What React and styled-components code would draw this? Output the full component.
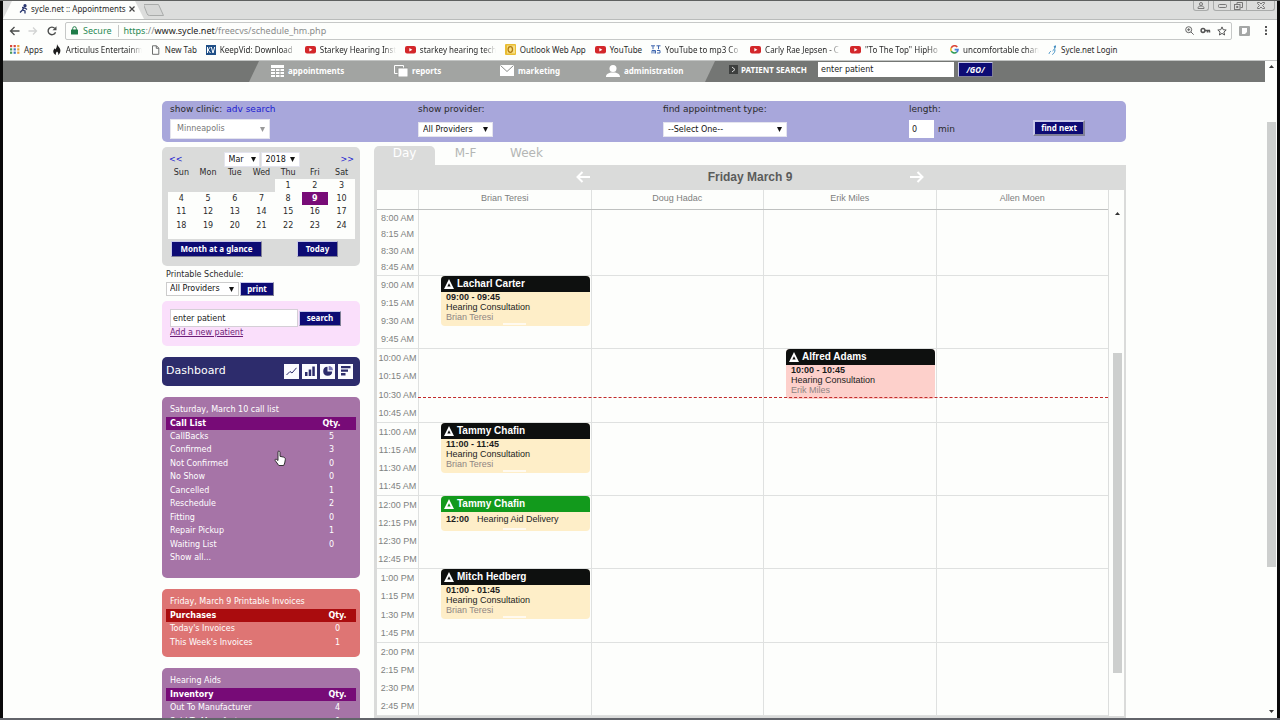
import React from "react";
import styled, { createGlobalStyle, css } from "styled-components";

const verdana = '"DejaVu Sans", sans-serif';
const arial = '"Liberation Sans", sans-serif';
const segoe = '"Noto Sans", sans-serif';

const GlobalStyle = createGlobalStyle`
  *, *::before, *::after { box-sizing: border-box; }
  body { margin: 0; background: #0a0a0a; font: 8px/10px ${verdana}; color: #2a2a2a; }
  a { color: inherit; text-decoration: none; }
  button, input, select { font: inherit; color: inherit; margin: 0; }
`;

/* ---------- browser window ---------- */
const Window = styled.div`
  display: flex;
  flex-direction: column;
  height: 100vh;
  padding: 1px 3px 2px;
  background: linear-gradient(#5e605f 1px, #0a0a0a 1px, #0a0a0a calc(100% - 2px), #62646a calc(100% - 2px));
  overflow: hidden;
`;
const TabStrip = styled.div`
  display: flex;
  justify-content: space-between;
  flex: 0 0 18px;
  background: #dcdddc;
  border-bottom: 1px solid #b9bbba;
`;
const TabGroup = styled.div`
  display: flex;
  align-items: flex-start;
`;
const BrowserTab = styled.div`
  display: flex;
  align-items: center;
  gap: 3px;
  width: 141px;
  height: 18px;
  padding: 0 0 2px 16px;
  background: #fdfefc;
  clip-path: polygon(9px 0, 132px 0, 100% 100%, 0 100%);
  font-family: ${segoe};
  svg { flex: none; }
`;
const TabTitle = styled.span`
  white-space: nowrap;
`;
const WindowControls = styled.div`
  display: flex;
  gap: 4px;
  padding-right: 2px;
`;
const ControlBox = styled.div`
  display: flex;
  height: 10px;
  border: 1px solid #a9abaa;
  border-top: 0;
  border-radius: 0 0 3px 3px;
`;
const ControlButton = styled.button`
  display: grid;
  place-items: center;
  width: ${(p) => p.$w}px;
  padding: 0;
  border: 0;
  background: none;
  & + & { border-left: 1px solid #a9abaa; }
`;
const AddressRow = styled.div`
  display: flex;
  align-items: center;
  flex: 0 0 21px;
  padding-left: 5px;
  background: #fdfefc;
  gap: 7px;
`;
const ToolButton = styled.button`
  display: grid;
  place-items: center;
  width: 12px;
  height: 12px;
  padding: 0;
  border: 0;
  background: none;
`;
const AddressBox = styled.div`
  display: flex;
  align-items: center;
  flex: 1;
  height: 18px;
  gap: 5px;
  padding: 0 4px 0 5px;
  border: 1px solid #c6c8c7;
  border-radius: 2px;
  font: 9px/12px ${segoe};
  color: #8b8d8c;
`;
const Secure = styled.span`
  padding-right: 6px;
  border-right: 1px solid #c6c8c7;
  color: #2b8a56;
`;
const Url = styled.span`
  flex: 1;
  b { font-weight: 400; color: #222; }
  i { font-style: normal; color: #2b8a56; }
`;
const MenuSlot = styled.div`
  display: flex;
  align-items: center;
  justify-content: space-between;
  width: 38px;
  padding: 0 9px 0 0;
`;
const Bookmarks = styled.nav`
  display: flex;
  align-items: center;
  flex: 0 0 20px;
  gap: 9px;
  padding: 0 0 2px 7px;
  background: #fdfefc;
  border-bottom: 1px solid #c3c5c4;
  font: 8px/12px ${segoe};
`;
const Bookmark = styled.a`
  display: flex;
  align-items: center;
  gap: 4px;
  flex: none;
  svg { flex: none; }
`;
const BookmarkText = styled.span`
  white-space: nowrap;
  ${(p) => p.$cut && css`
    width: 76px;
    mask-image: linear-gradient(90deg, #000 84%, transparent);
  `}
`;

/* ---------- page frame ---------- */
const PageArea = styled.div`
  display: flex;
  flex: 1;
  min-height: 0;
  background: #fdfefc;
`;
const Page = styled.div`
  flex: 1;
  min-width: 0;
  overflow: hidden;
`;
const PageScroll = styled.div`
  display: grid;
  grid-template-rows: 61px 445px 1fr;
  justify-items: center;
  width: 12px;
`;
const PageThumb = styled.div`
  width: 9px;
  background: #cdcfce;
`;
const ScrollArrow = styled.svg`
  width: 5px;
  height: 3px;
  margin: ${(p) => (p.$down ? "0 0 5px" : "4px 0 0")};
  align-self: ${(p) => (p.$down ? "end" : "start")};
`;
const NavBar = styled.header`
  display: flex;
  height: 21px;
  padding-left: 246px;
  background: #747674;
  color: #fff;
`;
const NavTabs = styled.nav`
  display: flex;
  background: #a2a4a2;
  clip-path: polygon(10px 0, 100% 0, calc(100% - 10px) 100%, 0 100%);
`;
const NavTab = styled.a`
  position: relative;
  display: flex;
  align-items: center;
  gap: 4px;
  width: ${(p) => p.$w}px;
  padding: 0 0 2px ${(p) => p.$pad}px;
  font: 700 8px/12px ${segoe};
  & + &::before {
    content: "";
    position: absolute;
    left: 4px;
    top: 0;
    width: 2px;
    height: 100%;
    background: #4b4d4c;
    transform: skewX(-26deg);
  }
`;
const PatientSearch = styled.form`
  display: flex;
  align-items: flex-start;
  gap: 4px;
  padding: 1px 0 0 14px;
`;
const SearchLabel = styled.label`
  display: flex;
  align-items: center;
  gap: 3px;
  height: 15px;
  width: 85px;
  white-space: nowrap;
  font: 700 8px/12px ${segoe};
`;
const TextBox = styled.input`
  width: ${(p) => p.$w}px;
  height: ${(p) => p.$h || 18}px;
  padding: 0 2px;
  border: 1px solid ${(p) => p.$edge || "#fff"};
  background: #fff;
  color: #222;
`;
const NavyButton = styled.button`
  width: ${(p) => p.$w}px;
  height: ${(p) => p.$h || 15}px;
  padding: 0;
  border: ${(p) => p.$b || 1}px outset #c8c8ea;
  background: #0d0b74;
  color: #fff;
  white-space: nowrap;
  font: ${(p) => (p.$italic ? "italic" : "normal")} 700 8px/10px ${segoe};
`;
const Content = styled.div`
  display: flex;
  flex-direction: column;
  gap: 4px;
  padding: 19px 139px 0 159px;
`;

/* ---------- filter bar ---------- */
const FilterBar = styled.form`
  display: grid;
  grid-template-columns: 248fr 245fr 246fr 124fr 93fr;
  height: 41px;
  padding: 2px 0 0 8px;
  border-radius: 5px;
  background: #a8a7db;
`;
const FilterField = styled.div`
  display: flex;
  flex-direction: column;
  align-items: flex-start;
  gap: ${(p) => p.$gap}px;
  label, span, a { font-size: 9px; line-height: 12px; }
  a { color: #1c1cd0; }
`;
const Inline = styled.div`
  display: flex;
  align-items: center;
  gap: 4px;
`;
const FindCell = styled.div`
  padding-top: 17px;
`;

const SelectFrame = styled.div`
  display: grid;
  align-items: center;
  width: ${(p) => p.$w}px;
  height: ${(p) => p.$h || 15}px;
  border: 1px solid ${(p) => p.$edge || "#e4e4ee"};
  background: #fff;
  select, svg { grid-area: 1 / 1; }
  svg { justify-self: end; margin-right: ${(p) => p.$arrow || 4}px; pointer-events: none; }
`;
const PlainSelect = styled.select`
  appearance: none;
  width: 100%;
  height: 100%;
  padding: 0 0 0 ${(p) => p.$pad}px;
  border: 0;
  background: none;
  color: ${(p) => p.$color};
  font-size: 8px;
  line-height: 10px;
`;
function Select({ id, label, value, w, h, pad = 4, color = "#111", arrowColor = "#111", edge, arrow }) {
  return (
    <SelectFrame $w={w} $h={h} $edge={edge} $arrow={arrow}>
      <PlainSelect id={id} aria-label={label} $pad={pad} $color={color}>
        <option>{value}</option>
      </PlainSelect>
      <svg width="5" height="5" viewBox="0 0 5 5"><path d="M0 0h5L2.500 5z" fill={arrowColor} /></svg>
    </SelectFrame>
  );
}

/* ---------- sidebar ---------- */
const Columns = styled.div`
  display: flex;
  gap: 14px;
`;
const Sidebar = styled.aside`
  flex: 0 0 198px;
  padding-top: 1px;
`;
const MiniCalendar = styled.section`
  height: 119px;
  padding: 5px 5px 0 6px;
  border-radius: 5px;
  background: #dadbda;
`;
const MonthRow = styled.div`
  display: flex;
  justify-content: space-between;
  align-items: center;
  padding: 0 1px;
  color: #1c1cd0;
`;
const MonthPickers = styled.div`
  display: flex;
  gap: 1px;
`;
const DayTable = styled.table`
  width: 100%;
  table-layout: fixed;
  border-collapse: collapse;
  text-align: center;
  th { height: 12px; padding: 0; font-weight: 400; }
  td { height: 13px; padding: 0; background: #fdfefc; }
  tr:last-child td { height: 21px; padding-bottom: 6px; }
  td:empty { background: #dadbda; }
  td[aria-selected="true"] { background: #770b77; color: #fff; font-weight: 700; }
`;
const CalendarButtons = styled.div`
  display: flex;
  justify-content: space-between;
  padding: 2px 17px 0 3px;
`;
const Printable = styled.form`
  display: flex;
  flex-direction: column;
  gap: 2px;
  padding: 4px 0 5px 4px;
`;
const PrintRow = styled.div`
  display: flex;
  gap: 1px;
`;
const SearchPanel = styled.form`
  display: flex;
  flex-direction: column;
  gap: 1px;
  height: 45px;
  padding: 8px;
  border-radius: 5px;
  background: #fadffb;
  a { color: #6d1c77; text-decoration: underline; }
`;
const Dashboard = styled.section`
  display: flex;
  align-items: center;
  gap: 3px;
  height: 29px;
  margin-top: 11px;
  padding: 0 7px 1px 4px;
  border-radius: 5px;
  background: #2d2c6c;
  h2 { flex: 1; margin: 0; font: 400 11px/14px ${verdana}; color: #fff; }
`;
const ChartButton = styled.button`
  display: grid;
  place-items: center;
  width: 15px;
  height: 15px;
  padding: 0;
  border: 0;
  background: #fbfbff;
`;
const ListPanel = styled.section`
  margin-top: 11px;
  padding: 7px 4px ${(p) => p.$bottom}px;
  border-radius: 5px;
  background: ${(p) => p.$bg};
  color: #fff;
`;
const ListTable = styled.table`
  width: 100%;
  height: ${(p) => p.$h}px;
  border-collapse: collapse;
  caption { height: 13px; padding-left: 4px; text-align: left; line-height: 12px; white-space: nowrap; }
  th { height: 13px; padding: 0 0 0 4px; background: ${(p) => p.$band}; text-align: left; font-weight: 700; }
  td { height: 13px; padding: 0 0 0 4px; }
  th:last-child, td:last-child { width: ${(p) => p.$qty}px; padding: 0; text-align: center; }
`;
function CountList({ title, heading, rows, bg, band, qty, h, bottom = 7 }) {
  return (
    <ListPanel $bg={bg} $bottom={bottom}>
      <ListTable $band={band} $qty={qty} $h={h}>
        <caption>{title}</caption>
        <thead><tr><th>{heading}</th><th>Qty.</th></tr></thead>
        <tbody>
          {rows.map(([name, count]) => (
            <tr key={name}><td><a href="#list">{name}</a></td><td>{count}</td></tr>
          ))}
        </tbody>
      </ListTable>
    </ListPanel>
  );
}

/* ---------- schedule ---------- */
const Schedule = styled.main`
  flex: 1;
  min-width: 0;
  font-family: ${arial};
`;
const ViewTabs = styled.nav`
  display: flex;
  align-items: flex-start;
  height: 19px;
  font: 12px/15px ${verdana};
`;
const ViewTab = styled.a`
  width: 61px;
  height: 19px;
  text-align: center;
  color: ${(p) => (p.$on ? "#fff" : "#b4b6b5")};
  background: ${(p) => (p.$on ? "#dadbda" : "none")};
  border-radius: 5px 5px 0 0;
`;
const DateBar = styled.div`
  display: flex;
  align-items: center;
  justify-content: center;
  gap: 118px;
  height: 25px;
  padding-bottom: 2px;
  background: #dadbda;
  h1 { margin: 0; font: 700 12px/16px ${arial}; color: #5a5c5b; }
`;
const ArrowButton = styled.button`
  display: grid;
  padding: 0;
  border: 0;
  background: none;
`;
const Board = styled.div`
  display: flex;
  border: solid #dadbda;
  border-width: 0 2px 2px 3px;
`;
const BoardMain = styled.div`
  flex: 1;
  border-right: 1px solid #dcdedd;
`;
const gridColumns = css`
  display: grid;
  grid-template-columns: 41px repeat(4, 1fr);
`;
const ProviderRow = styled.div`
  ${gridColumns}
  height: 20px;
  border-bottom: 1px solid #bfc1c0;
`;
const Provider = styled.div`
  border-left: 1px solid #dfe1e0;
  text-align: center;
  font-size: 9px;
  line-height: 17px;
  color: #7d7f7e;
`;
const Hours = styled.div`
  display: grid;
  grid-template-rows: 66px;
  grid-auto-rows: 1fr;
  height: 506px;
`;
const HourRow = styled.div`
  ${gridColumns}
  position: relative;
  border-bottom: 1px solid #dfe1e0;
`;
const SlotLabels = styled.div`
  display: grid;
  grid-template-rows: repeat(4, 1fr);
  align-items: center;
  text-align: center;
  font-size: 9px;
  line-height: 10px;
  color: #808281;
  white-space: nowrap;
`;
const HourCell = styled.div`
  border-left: 1px solid #dfe1e0;
  padding: 0 1px 0 22px;
`;
const NowLine = styled.div`
  position: absolute;
  left: 41px;
  right: 0;
  top: 48px;
  border-top: 1px dashed #c22b2b;
`;
const Appointment = styled.article`
  position: relative;
  height: ${(p) => p.$h}px;
  border-radius: 4px;
  overflow: hidden;
  background: ${(p) => p.$bg};
  color: #1c1c1c;
  font-size: 9px;
  line-height: 10px;
  h3 {
    display: flex;
    align-items: center;
    gap: 3px;
    height: 16px;
    margin: 0;
    padding-left: 3px;
    background: ${(p) => p.$head};
    color: #fff;
    font: 700 10px/16px ${arial};
  }
`;
const AppointmentBody = styled.div`
  display: flex;
  flex-direction: ${(p) => (p.$row ? "row" : "column")};
  gap: ${(p) => (p.$row ? 8 : 0)}px;
  padding: ${(p) => (p.$row ? 2 : 0)}px 5px 0;
  small { font-size: 9px; color: #8f8583; }
`;
const Grip = styled.i`
  position: absolute;
  left: 62px;
  bottom: 1px;
  width: 23px;
  height: 2px;
  background: #fffaf0;
`;
const BoardScroll = styled.div`
  display: grid;
  grid-template-rows: 163px 320px 1fr;
  justify-items: end;
  width: 15px;
  padding-right: 2px;
  svg { margin: 22px 2px 0 0; }
`;
const BoardThumb = styled.div`
  width: 9px;
  background: #cdcfce;
`;
const Pointer = styled.svg`
  position: fixed;
  left: 274px;
  top: 450px;
  width: 12px;
  height: 17px;
  pointer-events: none;
`;

/* ---------- icons ---------- */
const YouTubeIcon = () => (
  <svg width="11" height="9" viewBox="0 0 11 9"><rect y="1" width="11" height="7.5" rx="2" fill="#d3272a" /><path d="M4.3 3v3.6L7.4 4.8z" fill="#fff" /></svg>
);
const AppsIcon = () => (
  <svg width="10" height="9" viewBox="0 0 10 9">
    {["#d8473b", "#d8473b", "#e6a23a", "#4a9a57", "#3f74c9", "#e6a23a", "#4a9a57", "#3f74c9", "#e6a23a"].map((c, i) => (
      <rect key={i} x={(i % 3) * 3.6} y={Math.floor(i / 3) * 3.3} width="2.2" height="2.2" fill={c} />
    ))}
  </svg>
);
const FlameIcon = () => (
  <svg width="10" height="11" viewBox="0 0 10 11"><path d="M5 0c.4 2 3.4 3.600 3.400 6.600C8.400 9 7 10.600 6 11c.6-1.600.2-2.600-1-3.600-1 1-1.500 2.200-1 3.600C2 10.300 1 8.600 1.300 6.800c.2-1.200 1-1.800 1.400-2.600.3.500.6.800.7 1.300C4.600 4 5 2.500 5 0z" fill="#1b1b1b" /></svg>
);
const FileIcon = () => (
  <svg width="10" height="10" viewBox="0 0 10 10" fill="none" stroke="#6d6f6e"><path d="M1.500.8h4l2.300 2.300v6.200H1.500zM5.300.8v2.500h2.500" /></svg>
);
const KvIcon = () => (
  <svg width="10" height="10" viewBox="0 0 10 10"><rect width="10" height="10" fill="#1f4f86" /><path d="M1.500 2v6M4.300 2L2 5l2.500 3M5.300 2L7 8l1.700-6" stroke="#fff" fill="none" /></svg>
);
const OutlookIcon = () => (
  <svg width="11" height="11" viewBox="0 0 11 11"><rect width="11" height="11" rx="1" fill="#e9bd32" /><rect x="2" y="1.500" width="8" height="8" fill="#f7df85" /><ellipse cx="5.300" cy="5.500" rx="2.200" ry="2.800" fill="none" stroke="#b47d12" strokeWidth="1.300" /></svg>
);
const Mp3Icon = () => (
  <svg width="10" height="9" viewBox="0 0 10 9" stroke="#3f66ae" fill="none"><path d="M0 .8h4M2 .8v3.400M5.500.8h4M7.500.8v3.400M1 8.500V5.500h2v3M3 5.500h1.500v3M6 5.500h3v2.500H6" /></svg>
);
const GoogleIcon = () => (
  <svg width="9" height="9" viewBox="0 0 9 9" fill="none" strokeWidth="1.600"><path d="M7.300 2A3.600 3.600 0 0 0 1.300 2.800" stroke="#db4437" /><path d="M1.300 2.800a3.600 3.600 0 0 0 0 3.400" stroke="#f0b52c" /><path d="M1.300 6.200a3.600 3.600 0 0 0 5.400.9" stroke="#2f9b55" /><path d="M6.700 7.100a3.500 3.500 0 0 0 1.300-2.500H4.600" stroke="#4a7fd8" /></svg>
);
const SycleIcon = () => (
  <svg width="9" height="10" viewBox="0 0 9 10" fill="none" stroke="#3e8fc4"><path d="M7.500.5c-.5 3-1 4-3 5.500M7 4.500c0 2.500-1 4-2.700 5M2.800 6.200c-1 .6-1.500 1.600-1.800 2.600" /><circle cx="6.800" cy="1.800" r=".6" fill="#1f4d86" /></svg>
);
const SycleTabIcon = () => (
  <svg width="9" height="10" viewBox="0 0 9 10" fill="none" stroke="#27356e" strokeWidth="1.300"><circle cx="6" cy="1.700" r="1" fill="#27356e" /><path d="M5 3.500L3.500 6l2.500 1v2.500M3.500 6L1 8.500M3 3.500l3 .5 2 1.500" /></svg>
);
const TriangleIcon = () => (
  <svg width="10" height="10" viewBox="0 0 10 10"><path fillRule="evenodd" d="M5 0L10 10H0zM5 4.200L3.300 7.600h3.400z" fill="#fff" /></svg>
);
const Arrow = ({ flip }) => (
  <svg width="14" height="12" viewBox="0 0 14 12" fill="none" stroke="#fff" strokeWidth="2">
    <path d={flip ? "M0 6h12M7.500 1l5 5-5 5" : "M14 6H2M6.500 1l-5 5 5 5"} />
  </svg>
);

/* ---------- data ---------- */
const bookmarks = [
  ["Apps", AppsIcon],
  ["Articulus Entertainm", FlameIcon, true],
  ["New Tab", FileIcon],
  ["KeepVid: Download", KvIcon, true],
  ["Starkey Hearing Inst", YouTubeIcon, true],
  ["starkey hearing tech", YouTubeIcon, true],
  ["Outlook Web App", OutlookIcon],
  ["YouTube", YouTubeIcon],
  ["YouTube to mp3 Co", Mp3Icon, true],
  ["Carly Rae Jepsen - C", YouTubeIcon, true],
  ['"To The Top" HipHo', YouTubeIcon, true],
  ["uncomfortable chan", GoogleIcon, true],
  ["Sycle.net Login", SycleIcon],
];
const weeks = [
  ["", "", "", "", 1, 2, 3],
  [4, 5, 6, 7, 8, 9, 10],
  [11, 12, 13, 14, 15, 16, 17],
  [18, 19, 20, 21, 22, 23, 24],
];
const calls = [
  ["CallBacks", 5], ["Confirmed", 3], ["Not Confirmed", 0], ["No Show", 0], ["Cancelled", 1],
  ["Reschedule", 2], ["Fitting", 0], ["Repair Pickup", 1], ["Waiting List", 0], ["Show all...", ""],
];
const providers = ["Brian Teresi", "Doug Hadac", "Erik Miles", "Allen Moen"];
const hours = ["8 AM", "9 AM", "10 AM", "11 AM", "12 PM", "1 PM", "2 PM"];
const consult = "Hearing Consultation";
const appointments = [
  { hour: "9 AM", who: "Brian Teresi", name: "Lacharl Carter", time: "09:00 - 09:45", type: consult },
  { hour: "10 AM", who: "Erik Miles", name: "Alfred Adams", time: "10:00 - 10:45", type: consult, bg: "#fdd0cb" },
  { hour: "11 AM", who: "Brian Teresi", name: "Tammy Chafin", time: "11:00 - 11:45", type: consult },
  { hour: "12 PM", who: "Brian Teresi", name: "Tammy Chafin", time: "12:00", type: "Hearing Aid Delivery", head: "#129a1c", short: true },
  { hour: "1 PM", who: "Brian Teresi", name: "Mitch Hedberg", time: "01:00 - 01:45", type: consult },
];

function AppointmentCard({ item }) {
  return (
    <Appointment $h={item.short ? 35 : 50} $bg={item.bg || "#feeec8"} $head={item.head || "#0e100f"}>
      <h3><TriangleIcon />{item.name}</h3>
      <AppointmentBody $row={item.short}>
        <b>{item.time}</b>
        <span>{item.type}</span>
        {!item.short && <small>{item.who}</small>}
      </AppointmentBody>
      {!item.bg && <Grip />}
    </Appointment>
  );
}

function BrowserChrome() {
  return (
    <>
      <TabStrip>
        <TabGroup>
          <BrowserTab>
            <SycleTabIcon />
            <TabTitle>sycle.net :: Appointments</TabTitle>
            <svg width="6" height="6" viewBox="0 0 6 6" stroke="#444" strokeWidth="1.200"><path d="M.5.5l5 5M5.500.5l-5 5" /></svg>
          </BrowserTab>
          <svg width="26" height="17" viewBox="0 0 26 17"><path d="M-1.500 3.500h15l5 11h-14q-2 0-2.500-2z" fill="#d6d7d6" stroke="#a9abaa" transform="translate(1 0)" /></svg>
        </TabGroup>
        <WindowControls>
          <ControlBox>
            <ControlButton $w={14} aria-label="Profile"><svg width="8" height="7" viewBox="0 0 8 7" fill="none" stroke="#777"><circle cx="4" cy="2" r="1.500" /><path d="M1 6.500c0-2 1-2.500 3-2.500s3 .5 3 2.500z" /></svg></ControlButton>
          </ControlBox>
          <ControlBox>
            <ControlButton $w={16} aria-label="Minimize"><svg width="9" height="4" viewBox="0 0 9 4" fill="none" stroke="#777"><rect x=".5" y=".5" width="8" height="3" rx="1" /></svg></ControlButton>
            <ControlButton $w={16} aria-label="Restore"><svg width="9" height="8" viewBox="0 0 9 8" fill="none" stroke="#777"><path d="M3 2.500V.5h5.500v5h-2" /><rect x=".5" y="2.500" width="5.500" height="5" /><path d="M2.500 4.500h1.500v1H2.500z" /></svg></ControlButton>
            <ControlButton $w={28} aria-label="Close"><svg width="8" height="7" viewBox="0 0 8 7" fill="none" stroke="#777"><path d="M.5.5h2L4 2 5.500.5h2v1L5.500 3.500l2 2v1h-2L4 5 2.500 6.500h-2v-1l2-2-2-2z" /></svg></ControlButton>
          </ControlBox>
        </WindowControls>
      </TabStrip>
      <AddressRow>
        <ToolButton aria-label="Back"><svg width="11" height="10" viewBox="0 0 11 10" fill="none" stroke="#4b4d4c" strokeWidth="1.300"><path d="M10.500 5H1.500M5.500 1l-4 4 4 4" /></svg></ToolButton>
        <ToolButton aria-label="Forward"><svg width="10" height="10" viewBox="0 0 10 10" fill="none" stroke="#d2d4d3" strokeWidth="1.300"><path d="M.5 5h8M5 1.500L8.500 5 5 8.500" /></svg></ToolButton>
        <ToolButton aria-label="Reload"><svg width="10" height="10" viewBox="0 0 10 10" fill="none" stroke="#4b4d4c" strokeWidth="1.400"><path d="M8.500 6.200A3.800 3.800 0 1 1 7.800 2.400" /><path d="M9.500.3v4H5.500z" fill="#4b4d4c" stroke="none" /></svg></ToolButton>
        <AddressBox>
          <svg width="7" height="9" viewBox="0 0 7 9"><rect y="3.500" width="7" height="5" rx=".5" fill="#1f7c48" /><path d="M1.700 4V2.500a1.800 1.800 0 0 1 3.600 0V4" fill="none" stroke="#1f7c48" /></svg>
          <Secure>Secure</Secure>
          <Url><i>https</i>://<b>www.sycle.net</b>/freecvs/schedule_hm.php</Url>
          <svg width="9" height="9" viewBox="0 0 9 9" fill="none" stroke="#666"><circle cx="3.700" cy="3.700" r="3" /><path d="M6 6l2.700 2.700M2.200 3.700h3M3.700 2.200v3" /></svg>
          <svg width="13" height="7" viewBox="0 0 13 7" fill="none" stroke="#555" strokeWidth="1.500"><circle cx="4" cy="3.500" r="1.900" /><path d="M6 3.500h5M8.500 3.500v2M10.500 3.500v2" /></svg>
          <svg width="10" height="10" viewBox="0 0 10 10" fill="none" stroke="#555"><path d="M5 .9l1.200 2.800 3 .3-2.300 2 .7 3L5 7.400 2.400 9l.7-3L.8 4l3-.3z" /></svg>
        </AddressBox>
        <MenuSlot>
          <svg width="11" height="10" viewBox="0 0 11 10"><rect width="11" height="10" rx="1" fill="#a5a7a6" /><path d="M3 2h5v4L6 8H3z" fill="#fff" /></svg>
          <svg width="3" height="9" viewBox="0 0 3 9" fill="#555"><rect width="2" height="2" /><rect y="3.500" width="2" height="2" /><rect y="7" width="2" height="2" /></svg>
        </MenuSlot>
      </AddressRow>
      <Bookmarks>
        {bookmarks.map(([text, Icon, cut]) => (
          <Bookmark key={text} href="#bookmark"><Icon /><BookmarkText $cut={cut}>{text}</BookmarkText></Bookmark>
        ))}
      </Bookmarks>
    </>
  );
}

function SiteNav() {
  return (
    <NavBar>
      <NavTabs>
        <NavTab href="#appointments" $w={111} $pad={22}>
          <svg width="13" height="12" viewBox="0 0 13 12" fill="#fff"><rect width="13" height="3" /><path d="M0 4h4v2H0zM5 4h3.500v2H5zM9.500 4H13v2H9.500zM0 7h4v2H0zM5 7h3.500v2H5zM9.500 7H13v2H9.500zM0 10h4v2H0zM5 10h3.500v2H5zM9.500 10H13v2H9.500z" /></svg>
          appointments
        </NavTab>
        <NavTab href="#reports" $w={110} $pad={34}>
          <svg width="14" height="12" viewBox="0 0 14 12"><path d="M.5.5h9v8h-9z" fill="none" stroke="#fff" /><path d="M4 3h10v9H4z" fill="#fff" stroke="#8b8d8b" strokeWidth=".8" /></svg>
          reports
        </NavTab>
        <NavTab href="#marketing" $w={115} $pad={30}>
          <svg width="14" height="11" viewBox="0 0 14 11"><rect width="14" height="11" fill="#fff" /><path d="M.5.5L7 6.500 13.500.5" fill="none" stroke="#8b8d8b" /></svg>
          marketing
        </NavTab>
        <NavTab href="#administration" $w={130} $pad={21}>
          <svg width="14" height="12" viewBox="0 0 14 12" fill="#fff"><circle cx="7" cy="3.500" r="3.500" /><path d="M0 12c0-3 2-3.600 5-4.600h4c3 1 5 1.600 5 4.600z" /></svg>
          administration
        </NavTab>
      </NavTabs>
      <PatientSearch>
        <SearchLabel htmlFor="nav-search">
          <svg width="9" height="9" viewBox="0 0 9 9"><rect width="9" height="9" fill="#3d3f3e" /><path d="M3 2l3 2.500L3 7" fill="none" stroke="#ddd" /></svg>
          PATIENT SEARCH
        </SearchLabel>
        <TextBox id="nav-search" $w={136} $h={15} defaultValue="enter patient" />
        <NavyButton type="button" $w={35} $italic>/GO/</NavyButton>
      </PatientSearch>
    </NavBar>
  );
}

function Filters() {
  return (
    <FilterBar>
      <FilterField $gap={4}>
        <Inline><label htmlFor="clinic">show clinic:</label><a href="#adv">adv search</a></Inline>
        <Select id="clinic" value="Minneapolis" w={100} h={20} pad={6} color="#777" arrowColor="#999" />
      </FilterField>
      <FilterField $gap={7}>
        <label htmlFor="provider">show provider:</label>
        <Select id="provider" value="All Providers" w={75} />
      </FilterField>
      <FilterField $gap={7}>
        <label htmlFor="type">find appointment type:</label>
        <Select id="type" value="--Select One--" w={124} />
      </FilterField>
      <FilterField $gap={5}>
        <label htmlFor="length">length:</label>
        <Inline><TextBox id="length" $w={25} defaultValue="0" /><span>min</span></Inline>
      </FilterField>
      <FindCell><NavyButton type="button" $w={52} $h={16} $b={2}>find next</NavyButton></FindCell>
    </FilterBar>
  );
}

function Side() {
  return (
    <Sidebar>
      <MiniCalendar>
        <MonthRow>
          <a href="#prev">&lt;&lt;</a>
          <MonthPickers>
            <Select label="Month" value="Mar" w={36} arrow={3} />
            <Select label="Year" value="2018" w={39} arrow={4} />
          </MonthPickers>
          <a href="#next">&gt;&gt;</a>
        </MonthRow>
        <DayTable>
          <thead><tr>{["Sun", "Mon", "Tue", "Wed", "Thu", "Fri", "Sat"].map((d) => <th key={d}>{d}</th>)}</tr></thead>
          <tbody>
            {weeks.map((week, i) => (
              <tr key={i}>{week.map((d, j) => <td key={j} aria-selected={d === 9}>{d}</td>)}</tr>
            ))}
          </tbody>
        </DayTable>
        <CalendarButtons>
          <NavyButton type="button" $w={91} $h={16}>Month at a glance</NavyButton>
          <NavyButton type="button" $w={41} $h={16}>Today</NavyButton>
        </CalendarButtons>
      </MiniCalendar>
      <Printable>
        <label htmlFor="printable">Printable Schedule:</label>
        <PrintRow>
          <Select id="printable" value="All Providers" w={73} h={14} pad={3} edge="#ccc" />
          <NavyButton type="button" $w={34} $h={14}>print</NavyButton>
        </PrintRow>
      </Printable>
      <SearchPanel>
        <PrintRow>
          <TextBox aria-label="Patient" $w={128} $edge="#d4cfd6" defaultValue="enter patient" />
          <Inline><NavyButton type="button" $w={42}>search</NavyButton></Inline>
        </PrintRow>
        <a href="#add">Add a new patient</a>
      </SearchPanel>
      <Dashboard>
        <h2>Dashboard</h2>
        <ChartButton aria-label="Line chart"><svg width="11" height="9" viewBox="0 0 11 9" fill="none" stroke="#2d2c6c"><path d="M.5 8L4 4.500l2 1.500L10.500.8" /></svg></ChartButton>
        <ChartButton aria-label="Bar chart"><svg width="10" height="10" viewBox="0 0 10 10" fill="#2d2c6c"><path d="M0 6h2.500v4H0zM3.700 3.500h2.500V10H3.700zM7.300.5h2.500V10H7.300z" /></svg></ChartButton>
        <ChartButton aria-label="Pie chart"><svg width="10" height="10" viewBox="0 0 10 10" fill="#2d2c6c"><path d="M4.500.8v4.700h4.700A4.500 4.500 0 1 1 4.500.8z" /><path d="M5.700 0A4.300 4.300 0 0 1 10 4.300H5.700z" fill="#7875b4" /></svg></ChartButton>
        <ChartButton aria-label="Report"><svg width="10" height="10" viewBox="0 0 10 10" fill="#2d2c6c"><path d="M0 0h9.500v2.200H0zM0 3.500h7v2.200H0zM0 7h4.500v2.500H0z" /></svg></ChartButton>
      </Dashboard>
      <CountList title="Saturday, March 10 call list" heading="Call List" rows={calls} bg="#a674a7" band="#770b77" qty={49} h={148} bottom={13} />
      <CountList title="Friday, March 9 Printable Invoices" heading="Purchases" rows={[["Today's Invoices", 0], ["This Week's Invoices", 1]]} bg="#de7574" band="#aa0c0e" qty={37} h={41} />
      <CountList title="Hearing Aids" heading="Inventory" rows={[["Out To Manufacturer", 4], ["Sold To Manufacturer", 0]]} bg="#a674a7" band="#770b77" qty={37} h={41} />
    </Sidebar>
  );
}

function DaySchedule() {
  return (
    <Schedule>
      <ViewTabs>
        <ViewTab href="#day" $on>Day</ViewTab>
        <ViewTab href="#mf">M-F</ViewTab>
        <ViewTab href="#week">Week</ViewTab>
      </ViewTabs>
      <DateBar>
        <ArrowButton aria-label="Previous day"><Arrow /></ArrowButton>
        <h1>Friday March 9</h1>
        <ArrowButton aria-label="Next day"><Arrow flip /></ArrowButton>
      </DateBar>
      <Board>
        <BoardMain>
          <ProviderRow>
            <span />
            {providers.map((p) => <Provider key={p}>{p}</Provider>)}
          </ProviderRow>
          <Hours>
            {hours.map((hour) => {
              const [h, half] = hour.split(" ");
              return (
                <HourRow key={hour}>
                  <SlotLabels>
                    {["00", "15", "30", "45"].map((m) => <span key={m}>{`${h}:${m} ${half}`}</span>)}
                  </SlotLabels>
                  {providers.map((p) => (
                    <HourCell key={p}>
                      {appointments.filter((a) => a.hour === hour && a.who === p).map((a) => <AppointmentCard key={a.name} item={a} />)}
                    </HourCell>
                  ))}
                  {hour === "10 AM" && <NowLine />}
                </HourRow>
              );
            })}
          </Hours>
        </BoardMain>
        <BoardScroll>
          <svg width="5" height="3" viewBox="0 0 5 3"><path d="M0 3h5L2.500 0z" fill="#333" /></svg>
          <BoardThumb />
        </BoardScroll>
      </Board>
    </Schedule>
  );
}

export default function App() {
  return (
    <Window>
      <GlobalStyle />
      <BrowserChrome />
      <PageArea>
        <Page>
          <SiteNav />
          <Content>
            <Filters />
            <Columns>
              <Side />
              <DaySchedule />
            </Columns>
          </Content>
        </Page>
        <PageScroll>
          <ScrollArrow viewBox="0 0 5 3"><path d="M0 3h5L2.500 0z" fill="#333" /></ScrollArrow>
          <PageThumb />
          <ScrollArrow $down viewBox="0 0 5 3"><path d="M0 0h5L2.500 3z" fill="#333" /></ScrollArrow>
        </PageScroll>
      </PageArea>
      <Pointer viewBox="0 0 12 17"><path d="M4 1.500c1-.8 2 0 2 1v3.800l3.500.8c1.500.4 2 1.200 1.800 2.600l-.6 3.300-1 2.500H4.800L1.200 10.500c-.6-1 .6-1.800 1.500-1L4 10.500z" fill="#fff" stroke="#222" strokeWidth=".9" /></Pointer>
    </Window>
  );
}
